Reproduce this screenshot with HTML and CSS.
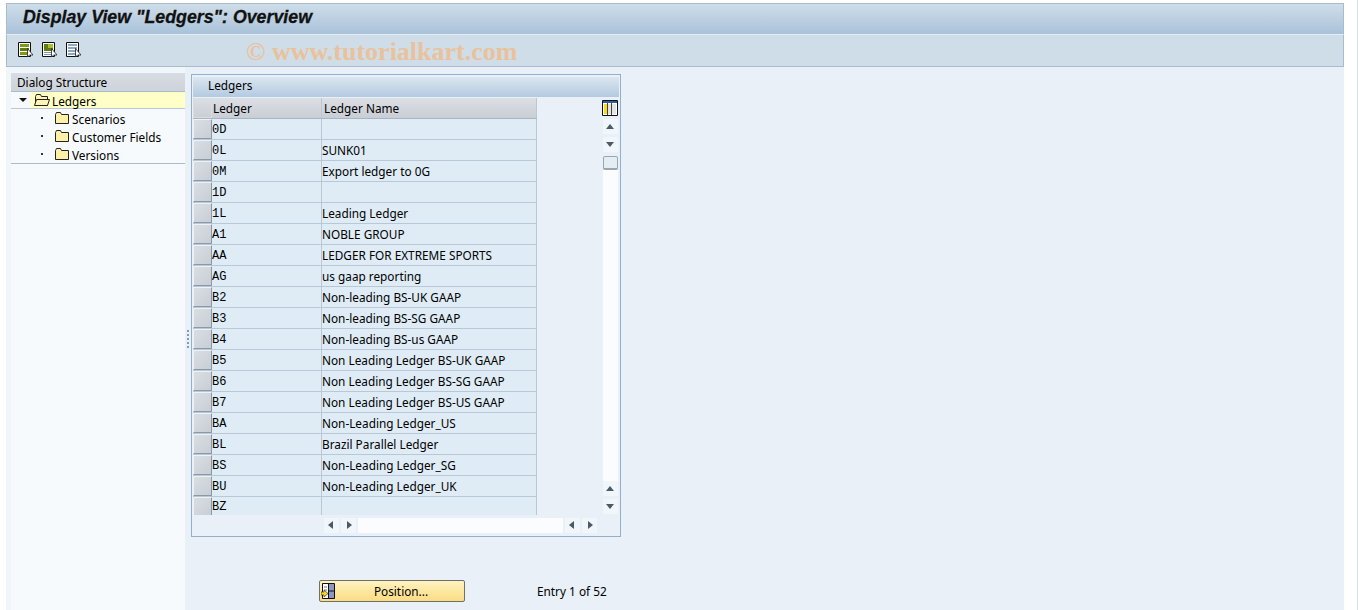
FILE: index.html
```html
<!DOCTYPE html>
<html lang="en">
<head>
  <meta charset="UTF-8">
  <title>Display View "Ledgers": Overview</title>
  <link rel="stylesheet" href="styles.css">
</head>
<body>
  <div class="window">
    <!-- Title -->
    <header class="title-bar">Display View "Ledgers": Overview</header>

    <!-- Toolbar -->
    <div class="toolbar">
      <svg class="tool-icon" viewBox="0 0 16 16"><path d="M.5.5h12v14H.5z" fill="#fff" stroke="#111"/><path d="M2 2h9v3H2z" fill="#7f9a12"/><path d="M2 6h9v3H2z" fill="#5f7d0c"/><path d="M2 10h9v3H2z" fill="#7f9a12"/><path d="M9.500 6.500v8.500l2-2h3.500z" fill="#fff" stroke="#222" stroke-width=".8"/></svg>
      <svg class="tool-icon" viewBox="0 0 16 16"><path d="M.5.5h12v14H.5z" fill="#fff" stroke="#111"/><path d="M2 2h9v7H2z" fill="#5f7d0c"/><path d="M6 2h5v4H6z" fill="#a8c030"/><path d="M2 10h9v1H2zM2 12h9v1H2z" fill="#7a9ab5"/><path d="M9.500 6.500v8.500l2-2h3.500z" fill="#fff" stroke="#222" stroke-width=".8"/></svg>
      <svg class="tool-icon" viewBox="0 0 16 16"><path d="M.5.5h12v14H.5z" fill="#fff" stroke="#111"/><path d="M2 2h9v2H2zM2 5h9v2H2zM2 8h9v2H2zM2 11h9v2H2z" fill="#8fa9c0"/><path d="M9.500 6.500v8.500l2-2h3.500z" fill="#fff" stroke="#222" stroke-width=".8"/></svg>
      <span class="watermark">© www.tutorialkart.com</span>
    </div>

    <div class="main">
      <!-- Dialog structure tree -->
      <aside class="tree-pane">
        <div class="tree">
          <div class="tree-head">Dialog Structure</div>
          <div class="tree-row tree-row-open">
            <span class="tree-arrow"></span>
            <div class="tree-current">
              <svg class="folder" viewBox="0 0 16 12"><path d="M1.500 2.500l1-2h4l1 2h6v9h-12z" fill="#fff3b8" stroke="#222"/><path d="M.5 11.500l2-6h13l-2 6z" fill="#fff3b8" stroke="#222"/></svg>
              <span class="tree-label">Ledgers</span>
            </div>
          </div>
          <div class="tree-row">
            <span class="tree-dot"></span>
            <svg class="folder" viewBox="0 0 16 12"><path d="M1.500 2.500l1-2h4l1 2h7v9h-13z" fill="#fff0a8" stroke="#222"/></svg>
            <span class="tree-label">Scenarios</span>
          </div>
          <div class="tree-row">
            <span class="tree-dot"></span>
            <svg class="folder" viewBox="0 0 16 12"><path d="M1.500 2.500l1-2h4l1 2h7v9h-13z" fill="#fff0a8" stroke="#222"/></svg>
            <span class="tree-label">Customer Fields</span>
          </div>
          <div class="tree-row">
            <span class="tree-dot"></span>
            <svg class="folder" viewBox="0 0 16 12"><path d="M1.500 2.500l1-2h4l1 2h7v9h-13z" fill="#fff0a8" stroke="#222"/></svg>
            <span class="tree-label">Versions</span>
          </div>
        </div>
      </aside>

      <div class="sash"><span class="sash-grip"></span></div>

      <!-- Ledgers table -->
      <section class="content">
        <div class="panel">
          <div class="panel-title">Ledgers</div>
          <div class="panel-body">
            <div class="table">
              <div class="row head"><div class="sel"></div><div class="c1">Ledger</div><div class="c2">Ledger Name</div></div>
              <div class="row"><div class="sel"></div><div class="c1">0D</div><div class="c2"></div></div>
              <div class="row"><div class="sel"></div><div class="c1">0L</div><div class="c2">SUNK01</div></div>
              <div class="row"><div class="sel"></div><div class="c1">0M</div><div class="c2">Export ledger to 0G</div></div>
              <div class="row"><div class="sel"></div><div class="c1">1D</div><div class="c2"></div></div>
              <div class="row"><div class="sel"></div><div class="c1">1L</div><div class="c2">Leading Ledger</div></div>
              <div class="row"><div class="sel"></div><div class="c1">A1</div><div class="c2">NOBLE GROUP</div></div>
              <div class="row"><div class="sel"></div><div class="c1">AA</div><div class="c2">LEDGER FOR EXTREME SPORTS</div></div>
              <div class="row"><div class="sel"></div><div class="c1">AG</div><div class="c2">us gaap reporting</div></div>
              <div class="row"><div class="sel"></div><div class="c1">B2</div><div class="c2">Non-leading BS-UK GAAP</div></div>
              <div class="row"><div class="sel"></div><div class="c1">B3</div><div class="c2">Non-leading BS-SG GAAP</div></div>
              <div class="row"><div class="sel"></div><div class="c1">B4</div><div class="c2">Non-leading BS-us GAAP</div></div>
              <div class="row"><div class="sel"></div><div class="c1">B5</div><div class="c2">Non Leading Ledger BS-UK GAAP</div></div>
              <div class="row"><div class="sel"></div><div class="c1">B6</div><div class="c2">Non Leading Ledger BS-SG GAAP</div></div>
              <div class="row"><div class="sel"></div><div class="c1">B7</div><div class="c2">Non Leading Ledger BS-US GAAP</div></div>
              <div class="row"><div class="sel"></div><div class="c1">BA</div><div class="c2">Non-Leading Ledger_US</div></div>
              <div class="row"><div class="sel"></div><div class="c1">BL</div><div class="c2">Brazil Parallel Ledger</div></div>
              <div class="row"><div class="sel"></div><div class="c1">BS</div><div class="c2">Non-Leading Ledger_SG</div></div>
              <div class="row"><div class="sel"></div><div class="c1">BU</div><div class="c2">Non-Leading Ledger_UK</div></div>
              <div class="row last"><div class="sel"></div><div class="c1">BZ</div><div class="c2"></div></div>
            </div>
            <div class="vscroll">
              <svg class="config-icon" viewBox="0 0 16 16"><path d="M.5.5h15v15H.5z" fill="#fff" stroke="#111"/><path d="M1 1h14v2H1z" fill="#2b5f9e"/><path d="M2 4h3v10H2z" fill="#f7dc1e"/><path d="M6 4h3v10H6zM10 4h4v10h-4z" fill="#e4e4e4"/><path d="M5.500 3v12M9.500 3v12" stroke="#444"/></svg>
              <span class="sb-btn sb-up"></span>
              <span class="sb-btn sb-down"></span>
              <span class="sb-thumb"></span>
              <span class="sb-track"></span>
              <span class="sb-btn sb-up"></span>
              <span class="sb-btn sb-down"></span>
            </div>
          </div>
          <div class="hscroll">
            <span class="sb-btn sb-left"></span>
            <span class="sb-btn sb-right"></span>
            <span class="sb-htrack"></span>
            <span class="sb-btn sb-left"></span>
            <span class="sb-btn sb-right"></span>
          </div>
        </div>

        <div class="footer">
          <button class="btn-position">
            <svg class="btn-icon" viewBox="0 0 14 16"><path d="M1.500.5h12v15h-12z" fill="#8c96c4" stroke="#111"/><path d="M2 1h5v14H2z" fill="#fff"/><path d="M7.500 1v14M8 8h5" stroke="#111"/><path d="M3 4h3M3 7h3" stroke="#777"/><path d="M0 9h3V7l4 3.500L3 14v-2H0z" fill="#f8d820" stroke="#222" stroke-width=".6"/></svg>
            <span>Position...</span>
          </button>
          <span class="entry">Entry 1 of 52</span>
        </div>
      </section>
    </div>
  </div>
</body>
</html>
```

FILE: styles.css
```css
/* Global */
html, body {
  height: 100%;
}

body {
  margin: 0;
  box-sizing: border-box;
  overflow: hidden;
  background: #fff;
  border-right: 1px solid #d5dce3;
  font-family: "Noto Sans", Arial, sans-serif;
  font-size: 11.8px;
  color: #000;
}

.window {
  display: flex;
  flex-direction: column;
  height: 607px;
  margin: 3px 13px 0 6px;
  background: #e9f0f7;
}

/* Title */
.title-bar {
  height: 31px;
  box-sizing: border-box;
  padding: 3px 0 0 16px;
  background: linear-gradient(#cfdde9, #a9c2da);
  border: 1px solid #a9bccd;
  border-bottom: 0;
  font-family: "Liberation Sans", Arial, sans-serif;
  font-size: 17.8px;
  font-weight: bold;
  font-style: italic;
  -webkit-text-stroke: .3px #111;
  color: #111;
}

/* Toolbar */
.toolbar {
  display: flex;
  align-items: center;
  height: 33px;
  box-sizing: border-box;
  padding: 0 0 1px 11px;
  gap: 8px;
  background: #cfdde8;
  border: 1px solid #a9bccd;
  border-top: 1px solid #e6eef5;
}

.tool-icon {
  width: 16px;
  height: 16px;
}

.watermark {
  margin-left: 156px;
  padding-top: 3px;
  font-family: "Liberation Serif", serif;
  font-size: 26px;
  font-weight: bold;
  color: #e9c29c;
}

.main {
  display: flex;
  flex: 1;
  min-height: 0;
}

/* Tree */
.tree-pane {
  width: 174px;
  padding: 6px 0 0 5px;
  background: #f1f6fb;
}

.tree {
  background: #f7fafd;
  height: 100%;
}

.tree-head {
  height: 18px;
  line-height: 18px;
  padding-left: 6px;
  background: linear-gradient(#d8dde3, #cdd3da);
  border-bottom: 1px solid #a9bccd;
}

.tree-row {
  display: flex;
  align-items: center;
  height: 18px;
  padding-left: 30px;
}

.tree-row:last-child {
  border-bottom: 1px solid #a9bccd;
}

.tree-row-open {
  padding-left: 8px;
  border-bottom: 1px solid #b8c8d8;
  height: 16px;
}

.tree-current {
  display: flex;
  align-items: center;
  flex: 1;
  height: 16px;
  margin-left: 3px;
  padding-left: 4px;
  background: #ffffc8;
}

.tree-label {
  padding-top: 2px;
}

.tree-arrow {
  width: 0;
  height: 0;
  border: 4px solid transparent;
  border-top: 4px solid #111;
  border-bottom: 0;
}

.tree-dot {
  width: 2px;
  height: 2px;
  background: #333;
  margin-right: 11px;
}

.folder {
  width: 16px;
  height: 12px;
  margin-right: 2px;
}

/* Sash */
.sash {
  display: flex;
  align-items: center;
  justify-content: center;
  width: 5px;
  background: #e9f0f7;
}

.sash-grip {
  width: 2px;
  height: 18px;
  background: repeating-linear-gradient(#8d9aa6 0 2px, transparent 2px 4px);
}

/* Content */
.content {
  padding: 7px 0 0 1px;
}

.panel {
  width: 430px;
  height: 463px;
  box-sizing: border-box;
  border: 1px solid #8fb0cf;
  padding: 2px 1px 0;
}

.panel-title {
  height: 20px;
  line-height: 16px;
  margin-bottom: 1px;
  padding-left: 15px;
  background: linear-gradient(#dbe6ef, #b3cae0);
}

.panel-body {
  display: flex;
  align-items: flex-start;
  height: 418px;
}

/* Table */
.table {
  width: 344px;
  height: 417px;
  overflow: hidden;
  background: #dfecf6;
}

.row {
  display: flex;
  height: 21px;
  box-sizing: border-box;
  border-bottom: 1px solid #b8c8d6;
}

.sel {
  width: 19px;
  box-sizing: border-box;
  background: linear-gradient(135deg, #d9dee3, #c8ced6);
  border: 1px solid #eef2f6;
  border-right: 1px solid #8b98a5;
  border-bottom: 1px solid #8b98a5;
}

.c1 {
  width: 110px;
  box-sizing: border-box;
  padding: 4px 0 0;
  border-right: 1px solid #b8c8d6;
  font-family: "Liberation Mono", monospace;
  font-size: 12px;
}

.c2 {
  flex: 1;
  padding: 2px 0 0;
  border-right: 1px solid #b8c8d6;
}

.head {
  background: linear-gradient(#dcdfe4, #c9ced5);
  border-bottom: 1px solid #a9b4c0;
}

.head .sel {
  background: none;
  border-color: #d9dde2;
}

.head .c1 {
  padding: 2px 0 0 1px;
  font-family: "Noto Sans", Arial, sans-serif;
  font-size: 11.8px;
}

.head .c2 {
  padding: 2px 0 0 2px;
}

.last .c1 {
  padding-top: 3px;
}

/* Scrollbars */
.vscroll {
  display: flex;
  flex-direction: column;
  align-items: center;
  width: 16px;
  height: 416px;
  margin-left: 65px;
}

.config-icon {
  flex: none;
  width: 16px;
  height: 16px;
  margin: 2px 0 3px;
}

.sb-btn {
  position: relative;
  flex: none;
  width: 15px;
  height: 15px;
  background: #f1f6fb;
  margin-bottom: 3px;
}

.sb-btn::after {
  content: "";
  position: absolute;
  left: 3px;
  top: 5px;
  width: 0;
  height: 0;
  border: 4px solid transparent;
}

.sb-up::after {
  border-top: 0;
  border-bottom: 5px solid #4b5a66;
}

.sb-down::after {
  border-bottom: 0;
  border-top: 5px solid #4b5a66;
}

.sb-left::after {
  left: 4px;
  top: 3px;
  border-left: 0;
  border-right: 5px solid #4b5a66;
}

.sb-right::after {
  left: 6px;
  top: 3px;
  border-right: 0;
  border-left: 5px solid #4b5a66;
}

.sb-thumb {
  flex: none;
  width: 13px;
  height: 11px;
  margin-top: 1px;
  background: #e4ecf4;
  border: 1px solid #9aa5af;
  border-bottom-width: 2px;
  border-radius: 2px;
}

.sb-track {
  flex: 1;
  width: 15px;
  background: #fafcfe;
}

.vscroll .sb-btn:last-child {
  margin-bottom: 0;
}

.hscroll {
  display: flex;
  height: 15px;
  margin-top: 2px;
  padding-left: 131px;
  gap: 2px;
}

.hscroll .sb-btn {
  margin: 0;
}

.sb-htrack {
  width: 205px;
  background: #fafcfe;
}

/* Footer */
.footer {
  display: flex;
  align-items: center;
  margin-top: 43px;
  padding-left: 128px;
}

.btn-position {
  display: flex;
  align-items: center;
  width: 146px;
  height: 22px;
  padding: 0;
  background: linear-gradient(#fff3c0, #fbdc82);
  border: 1px solid #6e6e6e;
  border-radius: 2px;
  font: 11.8px "Noto Sans", Arial, sans-serif;
  color: #000;
}

.btn-icon {
  width: 14px;
  height: 16px;
  margin-left: 1px;
}

.btn-position span {
  flex: 1;
  text-align: center;
  padding-left: 3px;
}

.entry {
  margin-left: 72px;
}
```
